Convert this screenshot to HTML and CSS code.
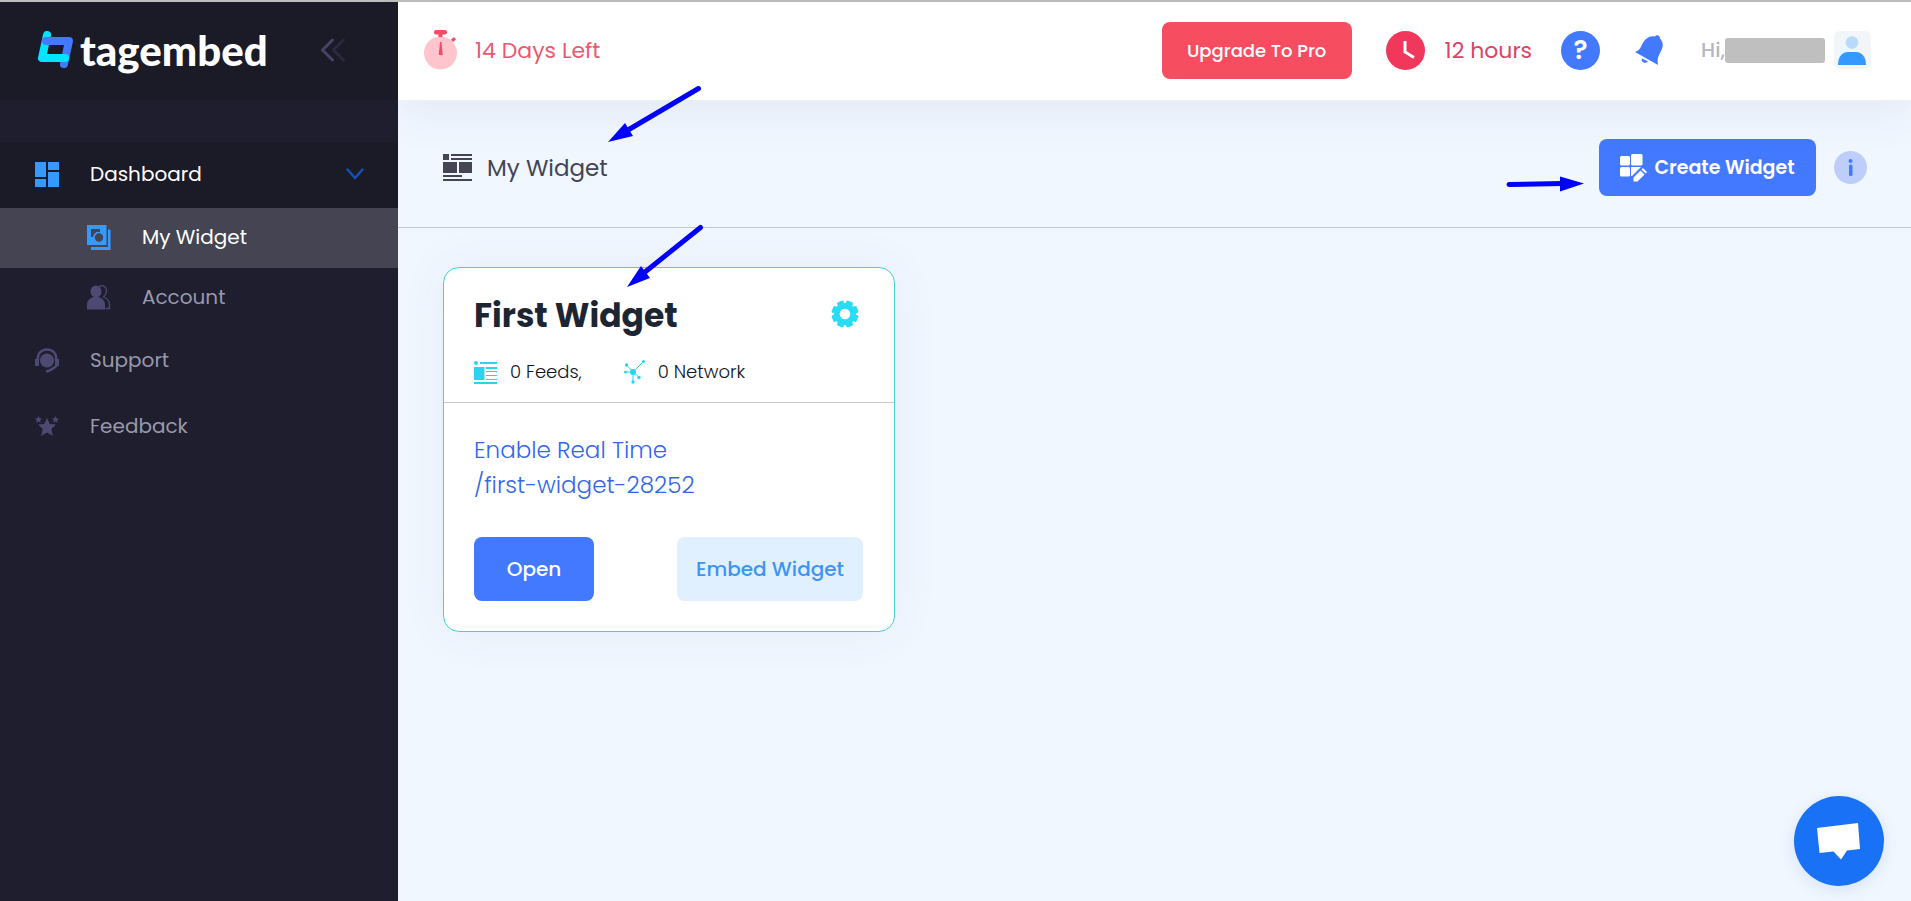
FILE: index.html
```html
<!DOCTYPE html>
<html lang="en">
<head>
<meta charset="utf-8">
<title>My Widget - Tagembed</title>
<link rel="stylesheet" href="styles.css">
</head>
<body>
<div class="app">
  <aside class="sidebar">
    <div class="brand">
      <a class="logo" href="#">
        <svg width="36" height="38" viewBox="0 0 36 38" aria-hidden="true">
          <path d="M9 4 4 27H27" fill="none" stroke="#00e5ff" stroke-width="8" stroke-linecap="round" stroke-linejoin="round"/>
          <path d="M8 10H31L26 33" fill="none" stroke="#4379ff" stroke-width="8" stroke-linecap="round" stroke-linejoin="round"/>
          <path d="M5 27H27" fill="none" stroke="#00e5ff" stroke-width="8" stroke-linecap="round"/>
        </svg>
        <span class="logo-text">tagembed</span>
      </a>
      <button class="icon-button" type="button" aria-label="Collapse menu">
        <svg width="26" height="24" viewBox="0 0 26 24" fill="none" stroke-width="3" stroke-linecap="round" stroke-linejoin="round"><path d="M12.500 2 2.500 12l10 10" stroke="#464367"/><path d="M23.500 2l-10 10 10 10" stroke="#2b293e"/></svg>
      </button>
    </div>
    <nav class="menu">
      <a class="item item-open" href="#">
        <svg class="item-icon" viewBox="0 0 24 25" fill="#3699ff"><path d="M0 0h11v15H0zM13 0h11v8H13zM0 17h11v8H0zM13 10h11v15H13z"/></svg>
        <span class="item-label">Dashboard</span>
        <svg width="18" height="12" viewBox="0 0 18 12" fill="none" stroke="#1551b5" stroke-width="2.500" stroke-linecap="round" stroke-linejoin="round"><path d="M1.500 1.500l7.500 8.500 7.500-8.500"/></svg>
      </a>
      <a class="item item-sub item-active" href="#">
        <svg class="item-icon" viewBox="0 0 24 25"><path fill="#3699ff" d="M0 0h19.500v20H0z"/><path fill="#444453" d="M4 4h9v3H9l-2 5H4z"/><circle cx="11.500" cy="12.500" r="5.500" fill="#3699ff"/><circle cx="12" cy="12.500" r="4.200" fill="#444453"/><path fill="#3699ff" d="M21 4.500h2.500V25H4v-3h17z"/></svg>
        <span class="item-label">My Widget</span>
      </a>
      <a class="item item-sub" href="#">
        <svg class="item-icon" viewBox="0 0 24 25" fill="#4c4972"><ellipse cx="9" cy="6.500" rx="5.500" ry="6"/><path d="M0 24.500V20c0-4 2-6 6-8h6c4 2 6 4 6 8v4.500z"/><path d="M12 1.500c4-2 7 0 7.500 3.500.3 3-1 5-3 7 4 1.500 6 4 6 8v3.500h-4" fill="none" stroke="#4c4972" stroke-width="1.300"/></svg>
        <span class="item-label">Account</span>
      </a>
      <a class="item" href="#">
        <svg class="item-icon" viewBox="0 0 24 25" fill="#4c4972"><circle cx="12" cy="12.500" r="7"/><path d="M3 12C2 5 7 1.500 12 1.500S22 5 21 12" fill="none" stroke="#4c4972" stroke-width="2.600"/><path d="M0 11h4v7H0zM20 11h4v7h-4z"/><path d="M22 17c-2 2-4 5-11 6.500" fill="none" stroke="#4c4972" stroke-width="2.600"/></svg>
        <span class="item-label">Support</span>
      </a>
      <a class="item" href="#">
        <svg class="item-icon" viewBox="0 0 24 25" fill="#4c4972"><path d="M12 4l2.800 6 6.200.6-4.700 4.500 1.500 6.900L12 18.500 6.200 22l1.500-6.900L3 10.600 9.200 10z"/><path id="s" d="M3.500 2l1 2.200 2.500.3L5.200 6.200l.5 2.600-2.200-1.300-2.200 1.300.5-2.600L0 4.500l2.500-.3z"/><use href="#s" x="17"/></svg>
        <span class="item-label">Feedback</span>
      </a>
    </nav>
  </aside>

  <div class="main">
    <header class="topbar">
      <div class="trial">
        <svg width="34" height="40" viewBox="0 0 34 40" aria-hidden="true"><circle cx="16.500" cy="23" r="16.500" fill="#ffc4cc"/><rect x="10" y="0" width="13" height="4.500" rx="2" fill="#f04e66"/><path d="M14.500 4h4v3h-4z" fill="#f04e66"/><path d="M16 12h1.500l1.200 13h-4z" fill="#f04e66"/><path d="M27 9.500l3-2.500 2 2.500-3 2.500z" fill="#f04e66"/></svg>
        <span>14 Days Left</span>
      </div>
      <div class="tools">
        <button class="button button-red" type="button">Upgrade To Pro</button>
        <div class="hours">
          <svg width="39" height="39" viewBox="0 0 39 39" aria-hidden="true"><circle cx="19.500" cy="19.500" r="19.500" fill="#f1375b"/><path d="M19 10v11l9 5.500" fill="none" stroke="#fff" stroke-width="3"/></svg>
          <span>12 hours</span>
        </div>
        <button class="round round-help" type="button" aria-label="Help">?</button>
        <button class="icon-button bell" type="button" aria-label="Notifications">
          <svg width="28" height="30" viewBox="0 0 28 30" fill="#4379ff"><path d="M0 17C7 15 6 8 11 4c3-2.500 6-3 9-2.500C21-.5 25 0 25 3.500 30 9 27 14 25 18c-2 4-3 6-2 12z"/><path d="M7 23.500l6 3c-3 3-7.500.5-6-3z"/></svg>
        </button>
        <div class="user">
          <span class="hi">Hi,</span><span class="mask"></span>
          <svg class="avatar" width="37" height="38" viewBox="0 0 37 38" aria-hidden="true"><rect width="37" height="38" rx="6" fill="#f3f6f9"/><circle cx="18" cy="11.500" r="6.300" fill="#b9dafb"/><path d="M4 34c0-8 4-13 10-13h8c6 0 10 5 10 13z" fill="#3699ff"/></svg>
        </div>
      </div>
    </header>

    <section class="titlebar">
      <div class="title">
        <svg width="29" height="27" viewBox="0 0 29 27" fill="#444455" aria-hidden="true"><path d="M0 0h6v6H0zM8 0h21v2H8zM8 4h21v2H8zM0 8h14v11H0zM16 8h13v11H16zM0 21h19v2H0zM0 25h29v2H0z"/></svg>
        <h1 class="title-text">My Widget</h1>
      </div>
      <div class="title-actions">
        <button class="button button-create" type="button">
          <svg width="27" height="28" viewBox="0 0 27 28" fill="#fff" aria-hidden="true"><rect x="0" y="2" width="10" height="9.500" rx="1.500"/><rect x="11" y="0" width="11.500" height="11.500" rx="1.500"/><rect x="0" y="13" width="10" height="9.500" rx="1.500"/><path d="M11 13h10l-9 9h-1z"/><path d="M13.500 23.500l7-7 4 4-7 7h-4zM21.500 15.500l1.500-1.500 4 4-1.500 1.500z"/></svg>
          <span>Create Widget</span>
        </button>
        <button class="round round-info" type="button" aria-label="Information">
          <svg width="5" height="17" viewBox="0 0 5 17" fill="#4379ff"><circle cx="2.500" cy="2" r="2"/><rect x="1" y="5.500" width="3.500" height="11.500" rx="1.500"/></svg>
        </button>
      </div>
    </section>

    <main class="content">
      <article class="card">
        <div class="card-head">
          <div class="card-title">
            <h2 class="card-name">First Widget</h2>
            <button class="icon-button gear" type="button" aria-label="Widget settings">
              <svg width="28" height="28" viewBox="-14 -14 28 28"><g fill="#29dcf5"><circle r="11"/><rect id="t" x="-3.500" y="-13.500" width="7" height="27" rx="1.500" transform="rotate(22.500)"/><use href="#t" transform="rotate(45)"/><use href="#t" transform="rotate(90)"/><use href="#t" transform="rotate(135)"/></g><circle r="5.300" fill="#fff"/></svg>
            </button>
          </div>
          <div class="stats">
            <span class="stat">
              <svg width="23" height="23" viewBox="0 0 23 23" fill="#29d5ee" aria-hidden="true"><circle cx="2" cy="2" r="2"/><path d="M6 1h17v2H6zM0 6h10.500v13H0zM12 6h11v2H12zM12 10h11v1H12zM12 14h11v1H12zM12 18h11v1H12zM0 21h23v2H0z"/></svg>
              <span>0 Feeds,</span>
            </span>
            <span class="stat">
              <svg width="21" height="24" viewBox="0 0 21 24" fill="#29d5ee" aria-hidden="true"><path d="M9 12 19 2M9 12 2.500 5M9 12H1.500M9 12v10M9 12l6 5" stroke="#29d5ee"/><circle cx="9" cy="12" r="3"/><circle cx="19.500" cy="1.500" r="1.500"/><circle cx="2.500" cy="5" r="1.700"/><circle cx="1.500" cy="12" r="1.500"/><circle cx="9" cy="22" r="1.700"/><circle cx="15" cy="17.500" r="1.700"/></svg>
              <span>0 Network</span>
            </span>
          </div>
        </div>
        <div class="card-body">
          <div class="links">
            <a class="link" href="#">Enable Real Time</a>
            <a class="link" href="#">/first-widget-28252</a>
          </div>
          <div class="card-actions">
            <button class="button button-open" type="button">Open</button>
            <button class="button button-embed" type="button">Embed Widget</button>
          </div>
        </div>
      </article>
    </main>
  </div>
</div>

<svg class="arrow arrow-title" width="100" height="62" viewBox="604 84 100 62"><path d="M698.500 88.500 628 130" stroke="#00f" stroke-width="5" stroke-linecap="round"/><path d="M608 142l17-19 8 13z" fill="#00f"/></svg>
<svg class="arrow arrow-card" width="84" height="68" viewBox="623 223 84 68"><path d="M700.500 227.500 645 272" stroke="#00f" stroke-width="5" stroke-linecap="round"/><path d="M627 287l14-21 9 12z" fill="#00f"/></svg>
<svg class="arrow arrow-create" width="80" height="20" viewBox="1506 174 80 20"><path d="M1509 184.500 1562 183.500" stroke="#00f" stroke-width="5" stroke-linecap="round"/><path d="M1584 183.500l-24-7v15z" fill="#00f"/></svg>

<button class="chat" type="button" aria-label="Open chat">
  <svg width="44" height="38" viewBox="0 0 44 38" fill="#fff"><path d="M0 6 41 1l2 26-13 1.500-6 9-7.500-8L2.500 31z"/></svg>
</button>
</body>
</html>
```
FILE: styles.css
```css
* { box-sizing: border-box; }

body {
  margin: 0;
  min-height: 100vh;
  font-family: Poppins, Inter, sans-serif;
  font-size: 20px;
  color: #1e2532;
  background: #f0f7ff;
}

button { font: inherit; border: 0; padding: 0; cursor: pointer; }
a { color: inherit; text-decoration: none; }
h1, h2 { margin: 0; }
svg { display: block; flex: none; }

.app {
  display: flex;
  min-height: 100vh;
  border-top: 2px solid #bebebe;
}

.icon-button { background: none; }

/* Sidebar */
.sidebar {
  position: relative;
  z-index: 2;
  flex: none;
  width: 398px;
  background: #1f1e2e;
}
.brand {
  display: flex;
  align-items: center;
  justify-content: space-between;
  height: 98px;
  padding: 0 52px 2px 38px;
  background: #1b1a27;
}
.logo { display: flex; align-items: center; gap: 6px; color: #fff; }
.logo-text {
  font-family: "Museo Slab", Lato, sans-serif;
  font-size: 42px;
  font-weight: 900;
  line-height: 44px;
}
.menu { padding-top: 42px; }
.item {
  display: flex;
  align-items: center;
  gap: 31px;
  height: 66px;
  padding: 0 34px 2px 35px;
  color: #9899ac;
}
.item-icon { width: 24px; height: 25px; }
.item-label { flex: 1; }
.item-open { background: #1b1a27; color: #fff; }
.item-sub { height: 60px; padding-left: 87px; }
.item-active { background: #444453; color: #fff; }

/* Header */
.main { flex: 1; min-width: 0; }
.topbar {
  position: relative;
  z-index: 1;
  display: flex;
  align-items: center;
  justify-content: space-between;
  height: 98px;
  padding: 0 40px 2px 26px;
  background: #fff;
  box-shadow: 0 10px 50px rgba(82, 63, 105, 0.08);
}
.trial { display: flex; align-items: center; gap: 17px; font-size: 22px; color: #e95a70; }
.tools { display: flex; align-items: center; }
.button { border-radius: 8px; font-weight: 500; }
.button-red {
  width: 190px;
  height: 57px;
  margin-right: 34px;
  font-size: 18px;
  color: #fff;
  background: #f64e60;
}
.hours { display: flex; align-items: center; gap: 20px; margin-right: 29px; font-size: 22px; color: #dd4366; }
.round {
  display: flex;
  align-items: center;
  justify-content: center;
  border-radius: 50%;
}
.round-help {
  width: 39px;
  height: 39px;
  font-size: 26px;
  font-weight: 600;
  color: #fff;
  background: #4379ff;
}
.bell { margin: 0 38px 0 35px; }
.user { display: flex; align-items: center; color: #b5b5c3; }
.hi { font-weight: 500; }
.mask { width: 100px; height: 25px; border-radius: 3px; background: #bfbfbf; }
.avatar { margin-left: 9px; }

/* Title bar */
.titlebar {
  display: flex;
  align-items: center;
  justify-content: space-between;
  height: 128px;
  padding: 8px 44px 0 45px;
  border-bottom: 1px solid #c3c7d0;
}
.title { display: flex; align-items: center; gap: 15px; color: #444455; }
.title-text { font-size: 23px; font-weight: 400; }
.title-actions { display: flex; align-items: center; gap: 18px; }
.button-create {
  display: flex;
  align-items: center;
  justify-content: center;
  gap: 7px;
  width: 217px;
  height: 57px;
  font-size: 19px;
  font-weight: 600;
  color: #fff;
  background: #4379ff;
}
.round-info { width: 33px; height: 33px; background: #bccef9; }

/* Widget card */
.content { padding: 39px 45px; }
.card {
  width: 452px;
  border: 1px solid #4ad0d8;
  border-radius: 16px;
  background: #fff;
  box-shadow: 0 0 50px rgba(82, 63, 105, 0.06);
}
.card-head { padding: 24px 30px 16px; border-bottom: 1px solid #c6c8cd; }
.card-title { display: flex; align-items: center; justify-content: space-between; padding-right: 5px; }
.card-name { font-size: 33px; font-weight: 700; line-height: 48px; }
.gear { padding-bottom: 5px; }
.stats { display: flex; gap: 42px; padding-top: 18px; font-size: 18px; font-weight: 300; line-height: 28px; color: #10141c; }
.stat { display: flex; align-items: center; gap: 13px; }
.card-body { padding: 30px 31px 30px 30px; }
.links { display: flex; flex-direction: column; align-items: flex-start; font-size: 23px; font-weight: 300; line-height: 35px; color: #3366ea; }
.card-actions { display: flex; justify-content: space-between; padding-top: 34px; }
.button-open { width: 120px; height: 64px; color: #fff; background: #4379ff; }
.button-embed { width: 186px; height: 64px; color: #3e94f4; background: #e1f0ff; }

/* Callout arrows */
.arrow { position: absolute; z-index: 5; pointer-events: none; }
.arrow-title { left: 604px; top: 84px; }
.arrow-card { left: 623px; top: 223px; }
.arrow-create { right: 325px; top: 174px; }

.chat {
  position: fixed;
  right: 27px;
  bottom: 15px;
  display: flex;
  align-items: center;
  justify-content: center;
  width: 90px;
  height: 90px;
  border-radius: 50%;
  background: #1972f5;
  box-shadow: 0 4px 16px rgba(25, 80, 160, 0.12);
}
```
